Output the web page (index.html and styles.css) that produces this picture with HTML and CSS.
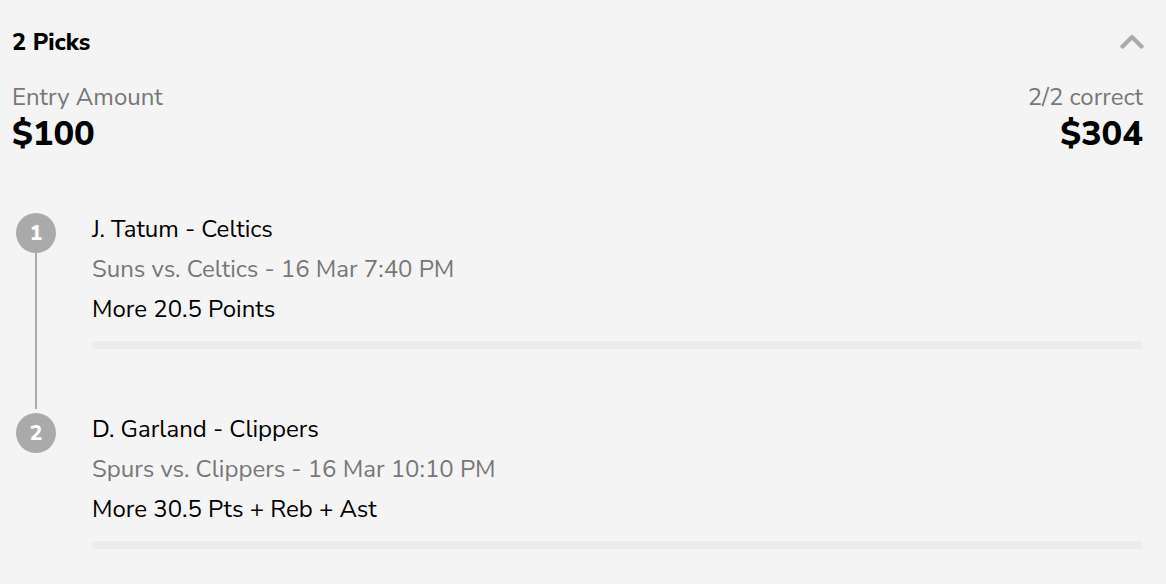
FILE: index.html
```html
<!DOCTYPE html>
<html lang="en">
<head>
<meta charset="utf-8">
<title>2 Picks</title>
<link rel="stylesheet" href="styles.css">
</head>
<body>
<section class="entry">
  <header class="entry-head">
    <h2 class="entry-title">2 Picks</h2>
    <svg class="chevron" width="24" height="16" viewBox="0 0 24 16" aria-hidden="true">
      <polyline points="2.5,13.5 12,4 21.5,13.5" fill="none" stroke="#aaaaaa" stroke-width="4.2" stroke-linecap="round" stroke-linejoin="round"/>
    </svg>
  </header>
  <div class="summary">
    <div class="summary-col">
      <div class="summary-label">Entry Amount</div>
      <div class="summary-value">$100</div>
    </div>
    <div class="summary-col right">
      <div class="summary-label">2/2 correct</div>
      <div class="summary-value">$304</div>
    </div>
  </div>
  <ol class="picks">
    <li class="pick">
      <div class="marker"><span class="dot">1</span><span class="rail"></span></div>
      <div class="pick-body">
        <div class="pick-player">J. Tatum - Celtics</div>
        <div class="pick-game">Suns vs. Celtics - 16 Mar 7:40 PM</div>
        <div class="pick-line">More 20.5 Points</div>
        <div class="pick-bar"></div>
      </div>
    </li>
    <li class="pick">
      <div class="marker"><span class="dot">2</span><span class="rail"></span></div>
      <div class="pick-body">
        <div class="pick-player">D. Garland - Clippers</div>
        <div class="pick-game">Spurs vs. Clippers - 16 Mar 10:10 PM</div>
        <div class="pick-line">More 30.5 Pts + Reb + Ast</div>
        <div class="pick-bar"></div>
      </div>
    </li>
  </ol>
</section>
</body>
</html>
```
FILE: styles.css
```css
html, body {
  margin: 0;
  padding: 0;
  background: #f4f4f4;
}
body {
  font-family: "Nunito Sans", "Lato", "Noto Sans", sans-serif;
  color: #000;
}
.entry {
  padding: 22px 23px 0 12px;
}
.entry-head {
  display: flex;
  align-items: center;
  justify-content: space-between;
  height: 40px;
}
.entry-title {
  margin: 0;
  font-size: 23.5px;
  font-weight: 800;
  line-height: 40px;
}
.chevron {
  display: block;
  margin-right: -1px;
  margin-top: -2px;
}
.summary {
  display: flex;
  justify-content: space-between;
  margin-top: 20px;
}
.summary-col.right {
  text-align: right;
}
.summary-label {
  font-size: 24px;
  line-height: 30px;
  color: #777;
}
.summary-value {
  font-size: 34.5px;
  font-weight: 800;
  line-height: 44px;
}
.picks {
  list-style: none;
  margin: 53px 0 0;
  padding: 0;
}
.pick {
  display: flex;
  height: 200px;
}
.marker {
  width: 80px;
  flex: none;
  display: flex;
  flex-direction: column;
  align-items: flex-start;
  padding-top: 4px;
  box-sizing: border-box;
}
.dot {
  width: 40px;
  height: 40px;
  margin-left: 4px;
  border-radius: 50%;
  background: #aaaaaa;
  color: #fff;
  font-weight: 800;
  font-size: 21px;
  line-height: 1;
  display: flex;
  align-items: center;
  justify-content: center;
  flex: none;
}
.rail {
  flex: 1;
  width: 2px;
  margin-left: 23px;
  background: #aaaaaa;
}
.pick:last-child .rail {
  visibility: hidden;
}
.pick-body {
  flex: 1;
  display: flex;
  flex-direction: column;
}
.pick-player,
.pick-game,
.pick-line {
  font-size: 24px;
  line-height: 40px;
}
.pick-game {
  color: #777;
}
.pick-bar {
  margin-top: 12px;
  height: 8px;
  border-radius: 4px;
  background: #ececec;
}
```
